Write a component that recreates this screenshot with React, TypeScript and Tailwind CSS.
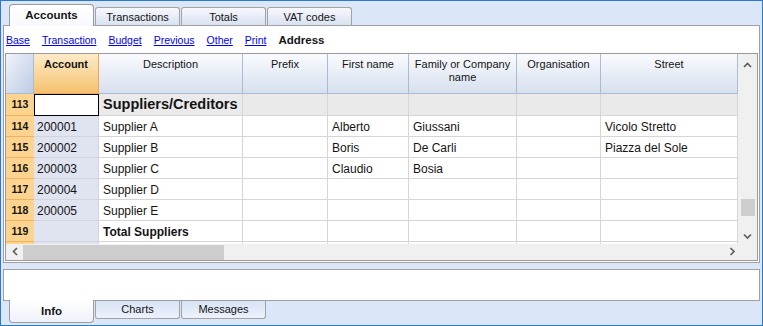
import React from "react";

type Row = {
  n?: number;
  acc?: string;
  desc?: string;
  first?: string;
  family?: string;
  street?: string;
  group?: boolean;
  total?: boolean;
};

const rows: Row[] = [
  { n: 113, desc: "Suppliers/Creditors", group: true },
  { n: 114, acc: "200001", desc: "Supplier A", first: "Alberto", family: "Giussani", street: "Vicolo Stretto" },
  { n: 115, acc: "200002", desc: "Supplier B", first: "Boris", family: "De Carli", street: "Piazza del Sole" },
  { n: 116, acc: "200003", desc: "Supplier C", first: "Claudio", family: "Bosia" },
  { n: 117, acc: "200004", desc: "Supplier D" },
  { n: 118, acc: "200005", desc: "Supplier E" },
  { n: 119, desc: "Total Suppliers", total: true },
];

const links = ["Base", "Transaction", "Budget", "Previous", "Other", "Print"];

function Chevron({ dir }: { dir: "up" | "down" | "left" | "right" }) {
  const d = {
    up: "M1 5 L4.5 1.5 L8 5",
    down: "M1 1.5 L4.5 5 L8 1.5",
    left: "M5 1 L1.5 4.5 L5 8",
    right: "M1.5 1 L5 4.5 L1.5 8",
  }[dir];
  const vertical = dir === "up" || dir === "down";
  return (
    <svg width={vertical ? 9 : 7} height={vertical ? 7 : 9} viewBox={vertical ? "0 0 9 7" : "0 0 7 9"}>
      <path d={d} stroke="#5f5f5f" strokeWidth="1.7" fill="none" />
    </svg>
  );
}

function TopTab({ label, active }: { label: string; active?: boolean }) {
  if (active)
    return (
      <div className="relative z-10 -mb-px flex h-[22px] w-[85px] items-center justify-center rounded-t-[4px] border border-b-0 border-[#9c9c9c] bg-gradient-to-b from-[#ffffff] to-[#f7f9fd] pt-px text-[11.5px] font-bold">
        {label}
      </div>
    );
  return (
    <div className="flex h-[18px] w-[85px] items-center justify-center rounded-t-[3px] border border-b-0 border-[#a3a3a3] bg-gradient-to-b from-[#f6f8fc] to-[#d9e2f2] pt-px text-[11px]">
      {label}
    </div>
  );
}

function BottomTab({ label, active }: { label: string; active?: boolean }) {
  if (active)
    return (
      <div className="-mt-px flex h-[23px] w-[85px] items-center justify-center rounded-b-[4px] border border-t-0 border-[#9c9c9c] bg-gradient-to-b from-[#ffffff] to-[#eef2fa] pt-[2px] text-[11.5px] font-bold">
        {label}
      </div>
    );
  return (
    <div className="flex h-[18px] w-[85px] items-center justify-center rounded-b-[3px] border border-t-0 border-[#a3a3a3] bg-gradient-to-b from-[#d8e3f5] to-[#edf2fb] text-[11px]">
      {label}
    </div>
  );
}

const cell = "h-full shrink-0 border-r border-b border-[#d6d6d6] flex items-center pl-[4px] pt-px whitespace-nowrap overflow-hidden";

function GridRow({ r, tall }: { r: Row; tall?: boolean }) {
  const bg = r.group ? "bg-[#eaeaea]" : "bg-white";
  return (
    <div className={`flex shrink-0 text-[12px] ${tall ? "h-[22px]" : "h-[21px]"}`}>
      <div className="flex h-full w-[28px] shrink-0 items-center justify-center border-b border-[#efb360] bg-[#fdd48f] pt-px text-[10.5px] font-bold">
        {r.n}
      </div>
      {r.group ? (
        <div className="h-full w-[65px] shrink-0 border border-black bg-white" />
      ) : (
        <div className="flex h-full w-[65px] shrink-0 items-center border-r border-b border-[#d2d4de] bg-[#e0e3f0] pl-[3px] pt-px">
          {r.acc}
        </div>
      )}
      <div className={`${cell} ${bg} w-[144px] ${r.group ? "text-[14.5px] font-bold" : ""} ${r.total ? "font-bold" : ""}`}>
        {r.desc}
      </div>
      <div className={`${cell} ${bg} w-[85px]`} />
      <div className={`${cell} ${bg} w-[81px]`}>{r.first}</div>
      <div className={`${cell} ${bg} w-[108px]`}>{r.family}</div>
      <div className={`${cell} ${bg} w-[84px]`} />
      <div className={`${cell} ${bg} w-[137px]`}>{r.street}</div>
    </div>
  );
}

const head = "h-full shrink-0 border-r border-b border-[#aabbd2] bg-gradient-to-b from-[#f9fbfe] to-[#d7e0ee] text-center pt-[4px] text-[11px] leading-[13px]";

export default function App() {
  return (
    <div className="flex h-[326px] w-[763px] flex-col overflow-hidden border border-[#2a7ad3] bg-[#dbe6f8] font-['Liberation_Sans',Arial,sans-serif] text-[#141414]">
      {/* top tabs */}
      <div className="flex h-[24px] shrink-0 items-end gap-px pl-[8px]">
        <TopTab label="Accounts" active />
        <TopTab label="Transactions" />
        <TopTab label="Totals" />
        <TopTab label="VAT codes" />
      </div>

      {/* main panel */}
      <div className="mx-[2px] flex h-[238px] shrink-0 flex-col border border-[#a0a0a0] bg-white px-px pb-px">
        <div className="flex h-[27px] shrink-0 items-center gap-[12px] pl-px pt-[2px] text-[10.5px]">
          {links.map((l) => (
            <span key={l} className="text-[#0000ee] underline">
              {l}
            </span>
          ))}
          <span className="text-[11.5px] font-bold">Address</span>
        </div>

        <div className="flex h-[208px] flex-col border border-[#9a9a9a]">
          <div className="flex h-[190px] shrink-0">
            <div className="flex w-[732px] shrink-0 flex-col overflow-hidden">
              <div className="flex h-[40px] shrink-0">
                <div className="h-full w-[28px] shrink-0 border-r border-b border-[#aabbd2] bg-gradient-to-br from-[#f0f4fb] to-[#bccbe3]" />
                <div className="h-full w-[65px] shrink-0 border-r border-b border-[#eca55c] bg-gradient-to-b from-[#fdebc8] to-[#f5c16c] pt-[4px] text-center text-[11px] font-bold leading-[13px]">
                  Account
                </div>
                <div className={`${head} w-[144px]`}>Description</div>
                <div className={`${head} w-[85px]`}>Prefix</div>
                <div className={`${head} w-[81px]`}>First name</div>
                <div className={`${head} w-[108px]`}>
                  Family or Company
                  <br />
                  name
                </div>
                <div className={`${head} w-[84px]`}>Organisation</div>
                <div className={`${head} w-[137px]`}>Street</div>
              </div>
              {rows.map((r, i) => (
                <GridRow key={r.n} r={r} tall={i === 0} />
              ))}
              <GridRow r={{}} />
            </div>
            <div className="relative w-[19px] shrink-0 bg-[#f0f0f0]">
              <div className="absolute left-[5px] top-[8px]">
                <Chevron dir="up" />
              </div>
              <div className="absolute left-[3px] top-[145px] h-[17px] w-[14px] bg-[#cdcdcd]" />
              <div className="absolute left-[5px] top-[179px]">
                <Chevron dir="down" />
              </div>
            </div>
          </div>
          <div className="relative h-[16px] shrink-0 bg-[#f0f0f0]">
            <div className="absolute left-[6px] top-[3px]">
              <Chevron dir="left" />
            </div>
            <div className="absolute left-[17px] top-[1px] h-[15px] w-[201px] bg-[#cdcdcd]" />
            <div className="absolute left-[723px] top-[3px]">
              <Chevron dir="right" />
            </div>
          </div>
        </div>
      </div>

      {/* info panel */}
      <div className="mx-[2px] mt-[6px] h-[32px] shrink-0 border border-[#a0a0a0] bg-white" />
      <div className="flex items-start gap-px pl-[8px]">
        <BottomTab label="Info" active />
        <BottomTab label="Charts" />
        <BottomTab label="Messages" />
      </div>
    </div>
  );
}
